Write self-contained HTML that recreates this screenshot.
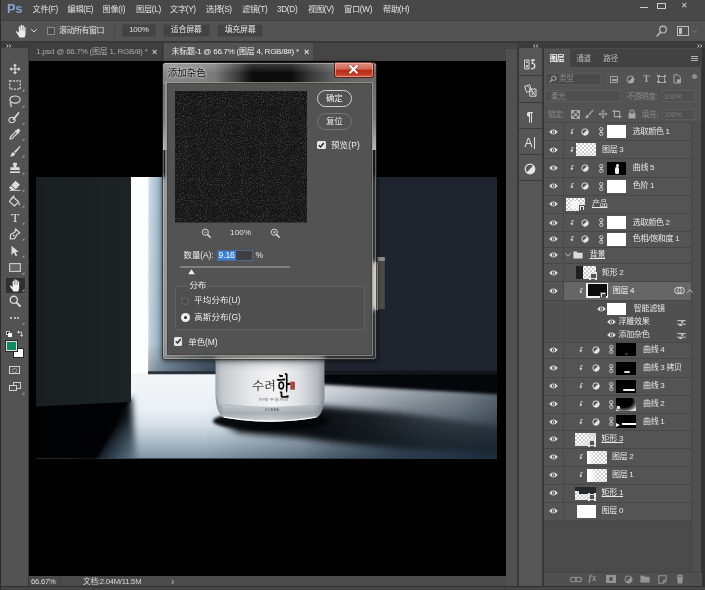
<!DOCTYPE html>
<html lang="zh-CN"><head><meta charset="utf-8"><title>Photoshop - 添加杂色</title>
<style>
html,body{margin:0;padding:0;background:#535353;}
body{width:705px;height:590px;overflow:hidden;position:relative;font-family:"Liberation Sans","Noto Sans CJK SC",sans-serif;}
#app{position:absolute;left:0;top:0;width:705px;height:590px;overflow:hidden;background:#535353;}
#app div,#app span,#app svg{box-sizing:border-box;}
svg{position:absolute;overflow:visible;}
.ic{stroke:#d8d8d8;fill:none;stroke-width:1.2;stroke-linecap:round;stroke-linejoin:round;}
</style></head><body><div id="app">

<div style="position:absolute;left:0px;top:0px;width:705px;height:20px;background:#484848;"></div>
<span style="position:absolute;left:7px;top:2.10px;font-size:12.8px;line-height:14.8px;color:#7fa6d2;white-space:nowrap;font-weight:bold;letter-spacing:-0.3px;">Ps</span>
<span style="position:absolute;left:32.5px;top:5.40px;font-size:8.2px;line-height:10.2px;color:#e2e2e2;white-space:nowrap;letter-spacing:-0.3px;">文件(F)</span>
<span style="position:absolute;left:67.5px;top:5.40px;font-size:8.2px;line-height:10.2px;color:#e2e2e2;white-space:nowrap;letter-spacing:-0.3px;">编辑(E)</span>
<span style="position:absolute;left:102.5px;top:5.40px;font-size:8.2px;line-height:10.2px;color:#e2e2e2;white-space:nowrap;letter-spacing:-0.3px;">图像(I)</span>
<span style="position:absolute;left:136px;top:5.40px;font-size:8.2px;line-height:10.2px;color:#e2e2e2;white-space:nowrap;letter-spacing:-0.3px;">图层(L)</span>
<span style="position:absolute;left:170px;top:5.40px;font-size:8.2px;line-height:10.2px;color:#e2e2e2;white-space:nowrap;letter-spacing:-0.3px;">文字(Y)</span>
<span style="position:absolute;left:206px;top:5.40px;font-size:8.2px;line-height:10.2px;color:#e2e2e2;white-space:nowrap;letter-spacing:-0.3px;">选择(S)</span>
<span style="position:absolute;left:242px;top:5.40px;font-size:8.2px;line-height:10.2px;color:#e2e2e2;white-space:nowrap;letter-spacing:-0.3px;">滤镜(T)</span>
<span style="position:absolute;left:277px;top:5.40px;font-size:8.2px;line-height:10.2px;color:#e2e2e2;white-space:nowrap;letter-spacing:-0.3px;">3D(D)</span>
<span style="position:absolute;left:308px;top:5.40px;font-size:8.2px;line-height:10.2px;color:#e2e2e2;white-space:nowrap;letter-spacing:-0.3px;">视图(V)</span>
<span style="position:absolute;left:344px;top:5.40px;font-size:8.2px;line-height:10.2px;color:#e2e2e2;white-space:nowrap;letter-spacing:-0.3px;">窗口(W)</span>
<span style="position:absolute;left:383px;top:5.40px;font-size:8.2px;line-height:10.2px;color:#e2e2e2;white-space:nowrap;letter-spacing:-0.3px;">帮助(H)</span>
<div style="position:absolute;left:640px;top:6.8px;width:8px;height:1.7px;background:#cfcfcf;"></div>
<div style="position:absolute;left:657px;top:3px;width:8.6px;height:6px;background:transparent;border:1.4px solid #cfcfcf;"></div>
<span style="position:absolute;left:681px;top:0.80px;font-size:8px;line-height:10px;color:#d8d8d8;white-space:nowrap;">✕</span>
<div style="position:absolute;left:0px;top:20px;width:705px;height:22px;background:#535353;border-top:1px solid #3e3e3e;border-bottom:1px solid #383838;"></div>
<svg style="left:15px;top:24px" width="12" height="14" viewBox="0 0 11.5 14"><path d="M4.2 13.5 C3.6 11.8 2.2 10.2 1 8.6 C0.4 7.8 1.4 6.9 2.2 7.6 L3.6 9 L3.6 3 C3.6 2 5 2 5 3 L5 6.5 L5.4 6.5 L5.4 1.6 C5.4 0.6 6.8 0.6 6.8 1.6 L6.8 6.5 L7.2 6.5 L7.2 2 C7.2 1 8.6 1 8.6 2 L8.6 6.8 L9 6.8 L9 3.4 C9 2.5 10.3 2.5 10.3 3.4 L10.3 9.5 C10.3 11.5 9.6 12.5 9.2 13.5 Z" fill="#ececec"/></svg>
<svg style="left:31px;top:29px" width="6" height="4" viewBox="0 0 6 4"><path d="M0.5 0.5 L3 3 L5.5 0.5" class="ic" style="stroke-width:1"/></svg>
<div style="position:absolute;left:47px;top:27px;width:8px;height:8px;background:#4a4a4a;border:1px solid #8a8a8a;"></div>
<span style="position:absolute;left:59px;top:25.80px;font-size:8px;line-height:10px;color:#e0e0e0;white-space:nowrap;letter-spacing:-0.5px;">滚动所有窗口</span>
<div style="position:absolute;left:121.7px;top:24.2px;width:34.3px;height:12.6px;background:#434343;border:1px solid #4b4b4b;border-radius:1px;"></div>
<span style="position:absolute;left:121.7px;top:24.2px;width:34.3px;height:12.6px;line-height:12.8px;text-align:center;font-size:8px;color:#e4e4e4;letter-spacing:-0.3px;">100%</span>
<div style="position:absolute;left:162.5px;top:24.2px;width:47.3px;height:12.6px;background:#434343;border:1px solid #4b4b4b;border-radius:1px;"></div>
<span style="position:absolute;left:162.5px;top:24.2px;width:47.3px;height:12.6px;line-height:12.8px;text-align:center;font-size:8px;color:#e4e4e4;letter-spacing:-0.3px;">适合屏幕</span>
<div style="position:absolute;left:216.7px;top:24.2px;width:46.7px;height:12.6px;background:#434343;border:1px solid #4b4b4b;border-radius:1px;"></div>
<span style="position:absolute;left:216.7px;top:24.2px;width:46.7px;height:12.6px;line-height:12.8px;text-align:center;font-size:8px;color:#e4e4e4;letter-spacing:-0.3px;">填充屏幕</span>
<div style="position:absolute;left:114px;top:24px;width:1px;height:14px;background:#464646;"></div>
<svg style="left:656px;top:25px" width="12" height="12" viewBox="0 0 12 12"><circle cx="7" cy="4.6" r="3.4" class="ic" style="stroke:#bdbdbd"/><path d="M4.6 7.2 L1.2 10.8" class="ic" style="stroke:#bdbdbd;stroke-width:1.6"/></svg>
<div style="position:absolute;left:677px;top:26px;width:12px;height:10px;background:transparent;border:1px solid #bdbdbd;"></div>
<div style="position:absolute;left:679px;top:28px;width:3px;height:6px;background:#bdbdbd;"></div>
<svg style="left:692px;top:30px" width="5" height="3" viewBox="0 0 5 3"><path d="M0.5 0.5 L2.5 2.5 L4.5 0.5" class="ic" style="stroke:#8a8a8a;stroke-width:0.8"/></svg>
<div style="position:absolute;left:0px;top:42px;width:705px;height:6px;background:#3c3c3c;"></div>
<div style="position:absolute;left:0px;top:48px;width:29px;height:542px;background:#535353;"></div>
<div style="position:absolute;left:29px;top:42px;width:477px;height:19px;background:#454545;border-top:1px solid #383838;"></div>
<svg style="left:6px;top:43.6px" width="5.4" height="4" viewBox="0 0 5.4 4"><path d="M0.5 0.5 L2.2 2 L0.5 3.5 M3.2 0.5 L4.9 2 L3.2 3.5" fill="none" stroke="#c4c4c4" stroke-width="1"/></svg>
<div style="position:absolute;left:29px;top:43px;width:134px;height:18px;background:#3f3f3f;border-right:1px solid #333;"></div>
<span style="position:absolute;left:36px;top:47.00px;font-size:8px;line-height:10px;color:#a9a9a9;white-space:nowrap;letter-spacing:-0.25px;">1.psd @ 66.7% (图层 1, RGB/8) *</span>
<span style="position:absolute;left:152px;top:46.50px;font-size:9px;line-height:11px;color:#c8c8c8;white-space:nowrap;font-weight:bold;">×</span>
<div style="position:absolute;left:164px;top:43px;width:149px;height:18px;background:#535353;"></div>
<span style="position:absolute;left:171.5px;top:47.00px;font-size:8px;line-height:10px;color:#efefef;white-space:nowrap;letter-spacing:-0.25px;">未标题-1 @ 66.7% (图层 4, RGB/8#) *</span>
<span style="position:absolute;left:304px;top:46.50px;font-size:9px;line-height:11px;color:#e4e4e4;white-space:nowrap;font-weight:bold;">×</span>
<svg style="left:29px;top:61px" width="477" height="515.3" viewBox="29 61 477 515.3">
<defs>
<clipPath id="sc"><rect x="36" y="177" width="461" height="281.5"/></clipPath>
<linearGradient id="gOpen" gradientUnits="userSpaceOnUse" x1="130" x2="220" y1="0" y2="0"><stop offset="0" stop-color="#ffffff"/><stop offset="0.195" stop-color="#fdfeff"/><stop offset="0.215" stop-color="#cbdbe7"/><stop offset="0.3" stop-color="#a9c0cf"/><stop offset="0.42" stop-color="#8aa1b3"/><stop offset="0.7" stop-color="#64788a"/><stop offset="1" stop-color="#46566a"/></linearGradient>
<linearGradient id="gOpenV" gradientUnits="userSpaceOnUse" x1="0" x2="0" y1="177" y2="373"><stop offset="0" stop-color="#0b1016" stop-opacity="0"/><stop offset="0.85" stop-color="#0b1016" stop-opacity="0.05"/><stop offset="1" stop-color="#0b1016" stop-opacity="0.3"/></linearGradient>
<linearGradient id="gDoor" gradientUnits="userSpaceOnUse" x1="36" x2="131" y1="0" y2="0"><stop offset="0" stop-color="#191f21"/><stop offset="1" stop-color="#1c2425"/></linearGradient>
<linearGradient id="gFloorH" gradientUnits="userSpaceOnUse" x1="100" x2="497" y1="0" y2="0"><stop offset="0" stop-color="#e6ecf0"/><stop offset="0.3" stop-color="#e4eaee"/><stop offset="0.57" stop-color="#bcc7ce"/><stop offset="0.68" stop-color="#93a2ac"/><stop offset="0.82" stop-color="#687883"/><stop offset="1" stop-color="#4c5b67"/></linearGradient>
<linearGradient id="gFloorVold" gradientUnits="userSpaceOnUse" x1="0" x2="0" y1="373" y2="458.5"><stop offset="0" stop-color="#101a24" stop-opacity="0"/><stop offset="0.3" stop-color="#101a24" stop-opacity="0.05"/><stop offset="0.55" stop-color="#101a24" stop-opacity="0.28"/><stop offset="0.8" stop-color="#0e1820" stop-opacity="0.55"/><stop offset="1" stop-color="#0c141c" stop-opacity="0.74"/></linearGradient>
<linearGradient id="gJar" x1="0" x2="1" y1="0" y2="0"><stop offset="0" stop-color="#a4aab0"/><stop offset="0.05" stop-color="#c2c7cb"/><stop offset="0.16" stop-color="#d2d6d9"/><stop offset="0.32" stop-color="#e6e8ea"/><stop offset="0.55" stop-color="#f4f4f5"/><stop offset="0.78" stop-color="#dde0e3"/><stop offset="0.94" stop-color="#b4b9be"/><stop offset="1" stop-color="#8a9198"/></linearGradient>
<linearGradient id="gJarB" x1="0" x2="1" y1="0" y2="0"><stop offset="0" stop-color="#8e969c"/><stop offset="0.08" stop-color="#d5d9dc"/><stop offset="0.5" stop-color="#e6e8ea"/><stop offset="0.9" stop-color="#c4c9cd"/><stop offset="1" stop-color="#7c858c"/></linearGradient>
<filter color-interpolation-filters="sRGB" id="b1" x="-10%" y="-100%" width="120%" height="300%"><feGaussianBlur color-interpolation-filters="sRGB" stdDeviation="0.7"/></filter>
<filter color-interpolation-filters="sRGB" id="b2" x="-20%" y="-20%" width="140%" height="140%"><feGaussianBlur color-interpolation-filters="sRGB" stdDeviation="1.5"/></filter>
<filter color-interpolation-filters="sRGB" id="b3" x="-30%" y="-50%" width="160%" height="200%"><feGaussianBlur color-interpolation-filters="sRGB" stdDeviation="3"/></filter>
<filter color-interpolation-filters="sRGB" id="b5" x="-30%" y="-50%" width="160%" height="200%"><feGaussianBlur color-interpolation-filters="sRGB" stdDeviation="5"/></filter>
<filter color-interpolation-filters="sRGB" id="b12" x="-50%" y="-50%" width="200%" height="200%"><feGaussianBlur color-interpolation-filters="sRGB" stdDeviation="12"/></filter>
<linearGradient id="gSh" gradientUnits="userSpaceOnUse" x1="320" x2="500" y1="0" y2="0"><stop offset="0" stop-color="#06090c" stop-opacity="0.96"/><stop offset="0.3" stop-color="#080c10" stop-opacity="0.85"/><stop offset="0.6" stop-color="#0a0f14" stop-opacity="0.6"/><stop offset="1" stop-color="#0a0f14" stop-opacity="0.35"/></linearGradient>
<linearGradient id="gJarTop" gradientUnits="userSpaceOnUse" x1="0" x2="0" y1="355" y2="372"><stop offset="0" stop-color="#6e757c" stop-opacity="0.55"/><stop offset="0.4" stop-color="#8a9097" stop-opacity="0.28"/><stop offset="1" stop-color="#8a9097" stop-opacity="0"/></linearGradient>
<linearGradient id="gJarBase" gradientUnits="userSpaceOnUse" x1="0" x2="0" y1="404" y2="422"><stop offset="0" stop-color="#7f878e" stop-opacity="0.2"/><stop offset="0.5" stop-color="#727a82" stop-opacity="0.5"/><stop offset="0.85" stop-color="#8c949b" stop-opacity="0.35"/><stop offset="1" stop-color="#ffffff" stop-opacity="0.2"/></linearGradient>
<linearGradient id="gFloorV" gradientUnits="userSpaceOnUse" x1="0" x2="0" y1="373" y2="458.5"><stop offset="0" stop-color="#f3f6f9"/><stop offset="0.42" stop-color="#ebf0f4"/><stop offset="0.6" stop-color="#d6e0e8"/><stop offset="0.74" stop-color="#b9c8d3"/><stop offset="1" stop-color="#8294a2"/></linearGradient>
<linearGradient id="gFloorR" gradientUnits="userSpaceOnUse" x1="300" x2="497" y1="0" y2="0"><stop offset="0" stop-color="#162432" stop-opacity="0"/><stop offset="0.15" stop-color="#162432" stop-opacity="0.16"/><stop offset="0.5" stop-color="#162432" stop-opacity="0.36"/><stop offset="0.8" stop-color="#162432" stop-opacity="0.52"/><stop offset="1" stop-color="#162432" stop-opacity="0.68"/></linearGradient>
<linearGradient id="gFloorRV" gradientUnits="userSpaceOnUse" x1="0" x2="0" y1="392" y2="458.5"><stop offset="0" stop-color="#0c1c2c" stop-opacity="0"/><stop offset="0.3" stop-color="#0c1c2c" stop-opacity="0.22"/><stop offset="1" stop-color="#0c1c2c" stop-opacity="0.62"/></linearGradient>
<linearGradient id="gPen" gradientUnits="userSpaceOnUse" x1="104" y1="436" x2="136" y2="460.6"><stop offset="0" stop-color="#020304" stop-opacity="1"/><stop offset="0.2" stop-color="#0c141c" stop-opacity="0.95"/><stop offset="0.6" stop-color="#2c3e4c" stop-opacity="0.82"/><stop offset="1" stop-color="#54697a" stop-opacity="0.62"/></linearGradient>
<linearGradient id="gMaskH" gradientUnits="userSpaceOnUse" x1="205" x2="400" y1="0" y2="0"><stop offset="0" stop-color="#000"/><stop offset="1" stop-color="#fff"/></linearGradient>
<mask id="mRV" maskUnits="userSpaceOnUse" x="190" y="370" width="320" height="95"><rect x="190" y="370" width="320" height="95" fill="url(#gMaskH)"/></mask>
</defs>
<rect x="29" y="61" width="477" height="515.3" fill="#010102"/>
<g clip-path="url(#sc)">
  <!-- back wall -->
  <rect x="36" y="177" width="461" height="196" fill="#1f242e"/>
  <!-- light opening -->
  <rect x="130" y="177" width="90" height="196" fill="url(#gOpen)"/>
  <rect x="148" y="177" width="72" height="196" fill="url(#gOpenV)"/>
  <!-- handle -->
  <rect x="368" y="262" width="10" height="48" fill="#e6e4c8"/>
  <rect x="377.6" y="257" width="7.2" height="52" fill="#4b4c4a"/>
  <rect x="377.6" y="257" width="7.2" height="4" fill="#8c8c8a"/>
  <!-- floor -->
  <rect x="36" y="373" width="461" height="86" fill="url(#gFloorV)"/>
  <rect x="300" y="373" width="197" height="86" fill="url(#gFloorR)"/>
  <rect x="195" y="373" width="302" height="86" fill="url(#gFloorRV)" mask="url(#mRV)"/>
  <!-- door shadow penumbra -->
  <polygon points="131.5,396 137,470 70,470" fill="url(#gPen)" filter="url(#b3)"/>
  <!-- hard door shadow -->
  <polygon points="10,396 131.5,400 84,480 10,480" fill="#010203" filter="url(#b2)"/>
  <!-- dark strip under wall, right -->
  <polygon points="322,372 500,372 500,394.5 322,384.5" fill="#04060a" filter="url(#b2)"/>
  <!-- jar cast shadow -->
  <polygon points="226,427 321,406 400,413 510,428 510,455 400,449 340,443 300,438 240,433" fill="url(#gSh)" filter="url(#b3)"/>
  <ellipse cx="271" cy="421" rx="58" ry="9.5" fill="#030508" opacity="0.97" filter="url(#b2)"/>
  <rect x="148" y="371.3" width="70" height="3" fill="#1c252e" opacity="0.9" filter="url(#b1)"/>
  <!-- door -->
  <polygon points="36,177 131,177 131,401.8 36,406.5" fill="url(#gDoor)"/>
  <!-- jar -->
  <path d="M215.5 355 L324.5 355 L324.5 396 Q324 412 317.5 417.3 Q270 426 222.5 417.3 Q216 412 215.5 396 Z" fill="url(#gJarB)"/>
  <path d="M216 355 L324 355 L324 396 Q322 404 316 405.5 Q270 409 224 405.5 Q218 404 216 396 Z" fill="url(#gJar)"/>
  <path d="M216 355 L324 355 L324 372 L216 372 Z" fill="url(#gJarTop)"/>
  <path d="M217 403 Q270 410.5 323 403 Q322.5 412 317.5 417.3 Q270 426 222.5 417.3 Q217.5 412 217 403 Z" fill="url(#gJarBase)"/>
  <path d="M219 404 Q270 411 321 404" stroke="#b6bcc1" stroke-width="1" fill="none" opacity="0.8"/>
  <path d="M224 417.2 Q270 425 316 417.2" stroke="#ffffff" stroke-width="1.3" fill="none" opacity="0.95"/>
  <text x="252" y="390.5" font-family="'Liberation Serif','Noto Serif CJK SC','NanumGothic',serif" font-size="11.5" fill="#111" textLength="24" lengthAdjust="spacingAndGlyphs">수려</text>
  <text x="276.5" y="395.5" font-family="'Liberation Serif','Noto Serif CJK SC','NanumGothic',serif" font-weight="bold" font-size="25" fill="#0c0c0c" textLength="14" lengthAdjust="spacingAndGlyphs">한</text>
  <rect x="290.3" y="381.7" width="4.6" height="8" fill="#a8453c"/>
  <text x="258.5" y="401.5" font-family="'Liberation Sans','Noto Sans CJK KR',sans-serif" font-size="3.6" fill="#777" textLength="30" lengthAdjust="spacingAndGlyphs">미백 주름개선</text>
  <text x="265" y="410.6" font-family="'Liberation Sans',sans-serif" font-size="3.2" fill="#555" textLength="14" lengthAdjust="spacingAndGlyphs">KOREA</text>
</g>
</svg>

<div style="position:absolute;left:29px;top:576.3px;width:477px;height:13.7px;background:#4b4b4b;"></div>
<span style="position:absolute;left:31px;top:577.20px;font-size:7.6px;line-height:9.6px;color:#dcdcdc;white-space:nowrap;letter-spacing:-0.2px;">66.67%</span>
<div style="position:absolute;left:59px;top:576.3px;width:1px;height:11px;background:#3e3e3e;"></div>
<span style="position:absolute;left:83px;top:577.20px;font-size:7.6px;line-height:9.6px;color:#d8d8d8;white-space:nowrap;letter-spacing:-0.2px;">文档:2.04M/11.5M</span>
<span style="position:absolute;left:171px;top:576.00px;font-size:10px;line-height:12px;color:#bbb;white-space:nowrap;">›</span>
<div style="position:absolute;left:506px;top:48px;width:12px;height:542px;background:#505050;"></div>
<div style="position:absolute;left:506px;top:42px;width:12px;height:6.5px;background:#454545;border-top:1px solid #383838;"></div>
<div style="position:absolute;left:28px;top:48px;width:1px;height:542px;background:#3a3a3a;"></div>
<svg style="left:8.6px;top:63.0px" width="12" height="12" viewBox="0 0 12 12"><path d="M6 0.5 L8 3 L6.6 3 L6.6 5.4 L9 5.4 L9 4 L11.5 6 L9 8 L9 6.6 L6.6 6.6 L6.6 9 L8 9 L6 11.5 L4 9 L5.4 9 L5.4 6.6 L3 6.6 L3 8 L0.5 6 L3 4 L3 5.4 L5.4 5.4 L5.4 3 L4 3 Z" fill="#dcdcdc"/></svg>
<svg style="left:8.6px;top:80.0px" width="12" height="10" viewBox="0 0 12 10"><rect x="0.8" y="0.8" width="10.4" height="8.4" fill="none" stroke="#dcdcdc" stroke-width="1.2" stroke-dasharray="2 1.3"/></svg>
<svg style="left:8.1px;top:95.0px" width="13" height="12" viewBox="0 0 13 12"><ellipse cx="7" cy="4.6" rx="5.2" ry="3.6" class="ic"/><path d="M3.2 7.2 Q1.5 8.5 2.8 10 Q4 11 3 11.6" class="ic"/></svg>
<svg style="left:8.1px;top:111.5px" width="13" height="12" viewBox="0 0 13 12"><path d="M10.5 1 L5.5 7.2" class="ic" style="stroke-width:1.8"/><ellipse cx="4" cy="8" rx="3.2" ry="2.6" class="ic" style="stroke-dasharray:1.6 1.1"/></svg>
<svg style="left:8.6px;top:128.0px" width="12" height="12" viewBox="0 0 12 12"><path d="M10.6 1.4 Q9 0 7.8 1.8 L7 2.8 L6.2 2.2 L5.4 3 L9 6.6 L9.8 5.8 L9.2 5 L10.2 4.2 Q12 3 10.6 1.4Z" fill="#dcdcdc"/><path d="M6 4.4 L1.4 9 L1 11 L3 10.6 L7.6 6" class="ic"/></svg>
<svg style="left:8.6px;top:145.0px" width="12" height="12" viewBox="0 0 12 12"><path d="M11 0.8 L5.2 6.6 L6.6 8 L11.6 1.6 Z" fill="#dcdcdc"/><path d="M4.6 7.2 Q2.4 7.2 2.2 9.4 Q2 10.8 0.6 11.2 Q4 12 5.6 10 Q6.4 8.8 5.8 8.2 Z" fill="#dcdcdc"/></svg>
<svg style="left:8.6px;top:162.0px" width="12" height="12" viewBox="0 0 12 12"><path d="M4.6 0.8 H7.4 Q8.4 0.8 8 2 L7.2 5.2 H10.6 V8 H1.4 V5.2 H4.8 L4 2 Q3.6 0.8 4.6 0.8Z" fill="#dcdcdc"/><rect x="1" y="9.4" width="10" height="1.6" fill="#dcdcdc"/></svg>
<svg style="left:8.1px;top:179.5px" width="13" height="11" viewBox="0 0 13 11"><path d="M7.4 0.8 L12 4.6 L7.2 10 L3.4 10 L1 7.8 Z" fill="#dcdcdc"/><path d="M3 5.6 L7.8 9.6" stroke="#535353" stroke-width="1"/><path d="M2 10.4 H12" class="ic" style="stroke-width:0.9"/></svg>
<svg style="left:8.1px;top:195.0px" width="13" height="12" viewBox="0 0 13 12"><path d="M5 2 L10.6 6.8 L6.4 11 L1.4 6.4 Z" class="ic"/><path d="M3.2 4.2 L6 1 " class="ic"/><path d="M10.8 7 Q12.8 9.6 11.4 10.6 Q10 10.6 10.8 7Z" fill="#dcdcdc"/></svg>
<span style="position:absolute;left:11px;top:209.85px;font-size:13.5px;line-height:15.5px;color:#e0e0e0;white-space:nowrap;font-family:&quot;Liberation Serif&quot;,serif;">T</span>
<svg style="left:8.6px;top:228.0px" width="12" height="12" viewBox="0 0 12 12"><path d="M6.6 0.8 L10.8 5 L8.2 6.2 L5.6 10.6 L1.2 11 L1.6 6.6 L6 4 Z" class="ic"/><circle cx="4.8" cy="7.4" r="0.9" fill="#dcdcdc"/></svg>
<svg style="left:9.6px;top:244.5px" width="10" height="12" viewBox="0 0 10 12"><path d="M1.5 0.8 L1.5 10 L4 7.6 L5.6 11.2 L7.2 10.4 L5.6 7 L8.8 7 Z" fill="#dcdcdc"/></svg>
<svg style="left:8.6px;top:263.0px" width="12" height="9" viewBox="0 0 12 9"><rect x="0.6" y="0.6" width="10.8" height="7.8" fill="#686868" stroke="#cfcfcf" stroke-width="1.1"/></svg>
<div style="position:absolute;left:6px;top:277.5px;width:18.5px;height:15.5px;background:#303030;border-radius:1px;"></div>
<svg style="left:8.8px;top:278.5px" width="11.5" height="13" viewBox="0 0.5 11.5 13.5"><path d="M4.2 13.5 C3.6 11.8 2.2 10.2 1 8.6 C0.4 7.8 1.4 6.9 2.2 7.6 L3.6 9 L3.6 3 C3.6 2 5 2 5 3 L5 6.5 L5.4 6.5 L5.4 1.6 C5.4 0.6 6.8 0.6 6.8 1.6 L6.8 6.5 L7.2 6.5 L7.2 2 C7.2 1 8.6 1 8.6 2 L8.6 6.8 L9 6.8 L9 3.4 C9 2.5 10.3 2.5 10.3 3.4 L10.3 9.5 C10.3 11.5 9.6 12.5 9.2 13.5 Z" fill="#f0f0f0"/></svg>
<svg style="left:8.6px;top:295.0px" width="12" height="12" viewBox="0 0 12 12"><circle cx="4.8" cy="4.8" r="3.6" class="ic" style="stroke-width:1.4"/><path d="M7.6 7.6 L11 11" class="ic" style="stroke-width:2"/></svg>
<div style="position:absolute;left:10.100000000000001px;top:316.6px;width:2.4px;height:2.4px;background:#dadada;border-radius:1.2px;"></div>
<div style="position:absolute;left:13.600000000000001px;top:316.6px;width:2.4px;height:2.4px;background:#dadada;border-radius:1.2px;"></div>
<div style="position:absolute;left:17.1px;top:316.6px;width:2.4px;height:2.4px;background:#dadada;border-radius:1.2px;"></div>
<svg style="left:21.5px;top:89px" width="2.4" height="2.4" viewBox="0 0 3 3"><path d="M3 0 V3 H0Z" fill="#a0a0a0"/></svg>
<svg style="left:21.5px;top:105px" width="2.4" height="2.4" viewBox="0 0 3 3"><path d="M3 0 V3 H0Z" fill="#a0a0a0"/></svg>
<svg style="left:21.5px;top:121.5px" width="2.4" height="2.4" viewBox="0 0 3 3"><path d="M3 0 V3 H0Z" fill="#a0a0a0"/></svg>
<svg style="left:21.5px;top:138px" width="2.4" height="2.4" viewBox="0 0 3 3"><path d="M3 0 V3 H0Z" fill="#a0a0a0"/></svg>
<svg style="left:21.5px;top:155px" width="2.4" height="2.4" viewBox="0 0 3 3"><path d="M3 0 V3 H0Z" fill="#a0a0a0"/></svg>
<svg style="left:21.5px;top:172px" width="2.4" height="2.4" viewBox="0 0 3 3"><path d="M3 0 V3 H0Z" fill="#a0a0a0"/></svg>
<svg style="left:21.5px;top:189px" width="2.4" height="2.4" viewBox="0 0 3 3"><path d="M3 0 V3 H0Z" fill="#a0a0a0"/></svg>
<svg style="left:21.5px;top:205px" width="2.4" height="2.4" viewBox="0 0 3 3"><path d="M3 0 V3 H0Z" fill="#a0a0a0"/></svg>
<svg style="left:21.5px;top:221.5px" width="2.4" height="2.4" viewBox="0 0 3 3"><path d="M3 0 V3 H0Z" fill="#a0a0a0"/></svg>
<svg style="left:21.5px;top:238px" width="2.4" height="2.4" viewBox="0 0 3 3"><path d="M3 0 V3 H0Z" fill="#a0a0a0"/></svg>
<svg style="left:21.5px;top:254.5px" width="2.4" height="2.4" viewBox="0 0 3 3"><path d="M3 0 V3 H0Z" fill="#a0a0a0"/></svg>
<svg style="left:21.5px;top:271.5px" width="2.4" height="2.4" viewBox="0 0 3 3"><path d="M3 0 V3 H0Z" fill="#a0a0a0"/></svg>
<svg style="left:21.5px;top:288.5px" width="2.4" height="2.4" viewBox="0 0 3 3"><path d="M3 0 V3 H0Z" fill="#a0a0a0"/></svg>
<svg style="left:21.5px;top:321.5px" width="2.4" height="2.4" viewBox="0 0 3 3"><path d="M3 0 V3 H0Z" fill="#a0a0a0"/></svg>
<div style="position:absolute;left:6px;top:331px;width:4px;height:4px;background:#111;border:0.5px solid #ccc;"></div>
<div style="position:absolute;left:8px;top:333px;width:4px;height:4px;background:#fff;"></div>
<svg style="left:17px;top:330px" width="7" height="7" viewBox="0 0 7 7"><path d="M1.2 2.2 H4.6 V5.6" class="ic" style="stroke-width:0.9"/><path d="M0 2.2 L2 0.6 V3.8Z M4.6 7 L3 5 H6.2Z" fill="#d8d8d8"/></svg>
<div style="position:absolute;left:12.6px;top:347.5px;width:11px;height:10.8px;background:#ffffff;border:0.5px solid #2a2a2a;"></div>
<div style="position:absolute;left:6.3px;top:340.6px;width:10.6px;height:10.6px;background:#0f8a5c;border:1px solid #dcdcdc;outline:0.6px solid #2a2a2a;"></div>
<div style="position:absolute;left:9.1px;top:366px;width:11.2px;height:8.4px;background:transparent;border:1px solid #cfcfcf;"></div>
<div style="position:absolute;left:12.2px;top:367.8px;width:5px;height:4.8px;background:transparent;border:1px dotted #bdbdbd;border-radius:3px;"></div>
<div style="position:absolute;left:12.6px;top:382.4px;width:8px;height:6.5px;background:transparent;border:1px solid #cfcfcf;"></div>
<div style="position:absolute;left:9.1px;top:384.8px;width:8.4px;height:6.4px;background:#535353;border:1px solid #cfcfcf;"></div>
<svg style="left:21.5px;top:392px" width="2.4" height="2.4" viewBox="0 0 3 3"><path d="M3 0 V3 H0Z" fill="#a0a0a0"/></svg>
<div style="position:absolute;left:517px;top:42px;width:188px;height:6px;background:#3c3c3c;"></div>
<svg style="left:533px;top:43.6px" width="5.4" height="4" viewBox="0 0 5.4 4"><path d="M2.2 0.5 L0.5 2 L2.2 3.5 M4.9 0.5 L3.2 2 L4.9 3.5" fill="none" stroke="#c4c4c4" stroke-width="1"/></svg>
<svg style="left:696.5px;top:43.6px" width="5.4" height="4" viewBox="0 0 5.4 4"><path d="M0.5 0.5 L2.2 2 L0.5 3.5 M3.2 0.5 L4.9 2 L3.2 3.5" fill="none" stroke="#c4c4c4" stroke-width="1"/></svg>
<div style="position:absolute;left:517px;top:48px;width:1.5px;height:542px;background:#383838;"></div>
<div style="position:absolute;left:518.5px;top:48px;width:23px;height:542px;background:#565656;"></div>
<div style="position:absolute;left:541.5px;top:48px;width:2px;height:542px;background:#383838;"></div>
<div style="position:absolute;left:518.5px;top:75.3px;width:23px;height:1.2px;background:#3c3c3c;"></div>
<div style="position:absolute;left:518.5px;top:101.5px;width:23px;height:1.2px;background:#3c3c3c;"></div>
<div style="position:absolute;left:518.5px;top:127.8px;width:23px;height:1.2px;background:#3c3c3c;"></div>
<div style="position:absolute;left:518.5px;top:154px;width:23px;height:1.2px;background:#3c3c3c;"></div>
<div style="position:absolute;left:518.5px;top:180.3px;width:23px;height:1.2px;background:#3c3c3c;"></div>
<svg style="left:524.0px;top:58.0px" width="12" height="12" viewBox="0 0 12 12"><rect x="1" y="2" width="4" height="9" class="ic" style="stroke-width:1"/><rect x="2.2" y="3.4" width="1.6" height="1.6" fill="#dcdcdc"/><rect x="2.2" y="7" width="1.6" height="2.6" fill="#dcdcdc"/><path d="M7.4 2 H10.4 Q8 3.4 8 5.4 Q10.8 5.4 10.8 8 Q10.8 10.6 7.4 10.8" class="ic" style="stroke-width:1.3"/></svg>
<svg style="left:523.9px;top:83.8px" width="13" height="13" viewBox="0 0 13 13"><path d="M1 2.2 L5.6 0.8 L7.6 6.8 L3 8.2Z" class="ic" style="stroke-width:1"/><path d="M6.2 5 L12 5 L12 12.2 L6.2 12.2Z" class="ic" style="stroke-width:1"/><path d="M3.2 1.6 L7.6 6.8 M7.8 6.6 L11 11.2 M8.4 7 V10.6 L10.6 7.4" class="ic" style="stroke-width:0.8"/></svg>
<span style="position:absolute;left:526.5px;top:109.50px;font-size:12px;line-height:14px;color:#e6e6e6;white-space:nowrap;font-weight:bold;">¶</span>
<span style="position:absolute;left:524.5px;top:136.00px;font-size:12px;line-height:14px;color:#e2e2e2;white-space:nowrap;">A</span>
<div style="position:absolute;left:533.5px;top:137px;width:1px;height:12px;background:#e2e2e2;"></div>
<svg style="left:524px;top:163px" width="12" height="12" viewBox="0 0 12 12"><circle cx="6" cy="6" r="4.8" fill="none" stroke="#e6e6e6" stroke-width="1.2"/><path d="M9.4 2.6 A4.8 4.8 0 0 1 2.6 9.4 Z" fill="#e6e6e6"/></svg>
<div style="position:absolute;left:543.5px;top:48px;width:158px;height:542px;background:#4b4b4b;"></div>
<div style="position:absolute;left:700.8px;top:48px;width:4.2px;height:542px;background:#333333;"></div>
<div style="position:absolute;left:543.5px;top:67px;width:157px;height:55px;background:#535353;"></div>
<div style="position:absolute;left:543.5px;top:48.5px;width:158px;height:18.5px;background:#424242;"></div>
<div style="position:absolute;left:543.5px;top:49px;width:26.5px;height:18px;background:#535353;"></div>
<span style="position:absolute;left:549.8px;top:53.50px;font-size:7.6px;line-height:9.6px;color:#f4f4f4;white-space:nowrap;font-weight:bold;letter-spacing:-0.4px;">图层</span>
<span style="position:absolute;left:576.3px;top:53.50px;font-size:7.6px;line-height:9.6px;color:#b4b4b4;white-space:nowrap;letter-spacing:-0.4px;">通道</span>
<span style="position:absolute;left:603.2px;top:53.50px;font-size:7.6px;line-height:9.6px;color:#b4b4b4;white-space:nowrap;letter-spacing:-0.4px;">路径</span>
<div style="position:absolute;left:691px;top:55.8px;width:7px;height:1.1px;background:#b4b4b4;"></div>
<div style="position:absolute;left:691px;top:58.0px;width:7px;height:1.1px;background:#b4b4b4;"></div>
<div style="position:absolute;left:691px;top:60.199999999999996px;width:7px;height:1.1px;background:#b4b4b4;"></div>
<div style="position:absolute;left:545px;top:72.8px;width:55.5px;height:12.4px;background:#4a4a4a;border:1px solid #585858;"></div>
<svg style="left:548.5px;top:75px" width="8" height="8" viewBox="0 0 8 8"><circle cx="4.8" cy="3.2" r="2.3" class="ic" style="stroke:#a6a6a6;stroke-width:1"/><path d="M3 5 L0.8 7.2" class="ic" style="stroke:#a6a6a6"/></svg>
<span style="position:absolute;left:559px;top:74.20px;font-size:7.6px;line-height:9.6px;color:#8c8c8c;white-space:nowrap;letter-spacing:-0.3px;">类型</span>
<div style="position:absolute;left:610.4px;top:75.5px;width:8px;height:7px;background:transparent;border:1px solid #a2a2a2;"></div>
<div style="position:absolute;left:612px;top:78.7px;width:5px;height:2.3px;background:#a2a2a2;"></div>
<svg style="left:626.3px;top:74.5px" width="9" height="9" viewBox="0 0 9 9"><circle cx="4.5" cy="4.5" r="3.5" fill="none" stroke="#a6a6a6" stroke-width="1"/><path d="M7 2 A3.5 3.5 0 0 1 2 7 Z" fill="#a6a6a6"/></svg>
<span style="position:absolute;left:643.3px;top:73.85px;font-size:9.5px;line-height:11.5px;color:#a6a6a6;white-space:nowrap;font-family:&quot;Liberation Serif&quot;,serif;font-weight:bold;">T</span>
<div style="position:absolute;left:658.2px;top:75.5px;width:7px;height:7px;background:transparent;border:1px solid #a2a2a2;"></div>
<div style="position:absolute;left:657.2px;top:74.5px;width:2.4px;height:2.4px;background:#a6a6a6;"></div>
<div style="position:absolute;left:663.7px;top:74.5px;width:2.4px;height:2.4px;background:#a6a6a6;"></div>
<div style="position:absolute;left:657.2px;top:81px;width:2.4px;height:2.4px;background:#a6a6a6;"></div>
<div style="position:absolute;left:663.7px;top:81px;width:2.4px;height:2.4px;background:#a6a6a6;"></div>
<svg style="left:673px;top:74px" width="9" height="10" viewBox="0 0 9 10"><path d="M1 0.8 H5 L7.4 3.2 V9 H1Z" fill="none" stroke="#a6a6a6" stroke-width="1"/><rect x="4" y="5.4" width="4" height="3.2" fill="#a6a6a6"/></svg>
<div style="position:absolute;left:692px;top:74px;width:5px;height:5px;background:#8e8e8e;border-radius:3px;"></div>
<div style="position:absolute;left:545px;top:90.3px;width:75.7px;height:11.8px;background:#4f4f4f;border:1px solid #5b5b5b;"></div>
<span style="position:absolute;left:551px;top:91.70px;font-size:7.6px;line-height:9.6px;color:#8a8a8a;white-space:nowrap;letter-spacing:-0.3px;">柔光</span>
<span style="position:absolute;left:627px;top:91.70px;font-size:7.6px;line-height:9.6px;color:#8a8a8a;white-space:nowrap;letter-spacing:-0.55px;">不透明度:</span>
<div style="position:absolute;left:661.7px;top:90.3px;width:33px;height:11.8px;background:#4f4f4f;border:1px solid #5b5b5b;"></div>
<span style="position:absolute;left:664px;top:91.80px;font-size:7.4px;line-height:9.4px;color:#7c7c7c;white-space:nowrap;letter-spacing:-0.3px;">100%</span>
<span style="position:absolute;left:548px;top:109.60px;font-size:7.6px;line-height:9.6px;color:#8a8a8a;white-space:nowrap;letter-spacing:-0.4px;">锁定:</span>
<svg style="left:571.1px;top:109.9px" width="9" height="9" viewBox="0 0 9 9"><rect x="0.5" y="0.5" width="8" height="8" fill="none" stroke="#a8a8a8" stroke-width="0.9"/><path d="M0.5 0.5 h2.7 v2.7 h-2.7z M5.8 0.5 h2.7 v2.7 h-2.7z M3.2 3.2 h2.7 v2.7 h-2.7z M0.5 5.8 h2.7 v2.7 h-2.7z M5.8 5.8 h2.7 v2.7 h-2.7z" fill="#a8a8a8"/></svg>
<svg style="left:584px;top:109.4px" width="10" height="10" viewBox="0 0 10 10"><path d="M9 0.6 L4.4 5.2 L5.4 6.2 L9.6 1.4 Z" fill="#a8a8a8"/><path d="M3.8 5.8 Q1.8 5.8 1.8 7.8 Q1.6 8.8 0.6 9.2 Q3.4 9.8 4.6 8.2 Q5.2 7.2 4.6 6.6Z" fill="#a8a8a8"/></svg>
<svg style="left:598.2px;top:109.4px" width="10" height="10" viewBox="0 0 12 12"><path d="M6 0.5 L8 3 L6.6 3 L6.6 5.4 L9 5.4 L9 4 L11.5 6 L9 8 L9 6.6 L6.6 6.6 L6.6 9 L8 9 L6 11.5 L4 9 L5.4 9 L5.4 6.6 L3 6.6 L3 8 L0.5 6 L3 4 L3 5.4 L5.4 5.4 L5.4 3 L4 3 Z" fill="#a8a8a8"/></svg>
<svg style="left:612.2px;top:109.4px" width="10" height="10" viewBox="0 0 10 10"><path d="M2.4 0.4 V7.6 H9.6 M0.4 2.4 H7.6 V9.6" fill="none" stroke="#a8a8a8" stroke-width="1.1"/></svg>
<svg style="left:627.7px;top:109px" width="8" height="10" viewBox="0 0 8 10"><rect x="0.6" y="4.4" width="6.8" height="5" fill="#a8a8a8"/><path d="M2 4.4 V2.8 Q2 1 4 1 Q6 1 6 2.8 V4.4" fill="none" stroke="#a8a8a8" stroke-width="1.1"/></svg>
<span style="position:absolute;left:641.8px;top:109.60px;font-size:7.6px;line-height:9.6px;color:#8a8a8a;white-space:nowrap;letter-spacing:-0.4px;">填充:</span>
<div style="position:absolute;left:661.7px;top:108.5px;width:33px;height:11.8px;background:#4f4f4f;border:1px solid #5b5b5b;"></div>
<span style="position:absolute;left:664px;top:109.70px;font-size:7.4px;line-height:9.4px;color:#7c7c7c;white-space:nowrap;letter-spacing:-0.3px;">100%</span>
<div style="position:absolute;left:543.5px;top:122px;width:147.5px;height:398px;background:#545454;"></div>
<div style="position:absolute;left:543.5px;top:300.3px;width:147.5px;height:42.2px;background:#505050;"></div>
<div style="position:absolute;left:563.5px;top:281.5px;width:127.5px;height:18.5px;background:#666666;"></div>
<div style="position:absolute;left:543.5px;top:122.0px;width:147.5px;height:1px;background:#474747;"></div>
<div style="position:absolute;left:543.5px;top:140.2px;width:147.5px;height:1px;background:#474747;"></div>
<div style="position:absolute;left:543.5px;top:158.3px;width:147.5px;height:1px;background:#474747;"></div>
<div style="position:absolute;left:543.5px;top:176.5px;width:147.5px;height:1px;background:#474747;"></div>
<div style="position:absolute;left:543.5px;top:194.5px;width:147.5px;height:1px;background:#474747;"></div>
<div style="position:absolute;left:543.5px;top:213.0px;width:147.5px;height:1px;background:#474747;"></div>
<div style="position:absolute;left:543.5px;top:231.0px;width:147.5px;height:1px;background:#474747;"></div>
<div style="position:absolute;left:543.5px;top:247.0px;width:147.5px;height:1px;background:#474747;"></div>
<div style="position:absolute;left:543.5px;top:262.5px;width:147.5px;height:1px;background:#474747;"></div>
<div style="position:absolute;left:543.5px;top:280.5px;width:147.5px;height:1px;background:#474747;"></div>
<div style="position:absolute;left:543.5px;top:299.8px;width:147.5px;height:1px;background:#474747;"></div>
<div style="position:absolute;left:543.5px;top:342.0px;width:147.5px;height:1px;background:#474747;"></div>
<div style="position:absolute;left:543.5px;top:358.2px;width:147.5px;height:1px;background:#474747;"></div>
<div style="position:absolute;left:543.5px;top:376.5px;width:147.5px;height:1px;background:#474747;"></div>
<div style="position:absolute;left:543.5px;top:394.5px;width:147.5px;height:1px;background:#474747;"></div>
<div style="position:absolute;left:543.5px;top:412.5px;width:147.5px;height:1px;background:#474747;"></div>
<div style="position:absolute;left:543.5px;top:430.0px;width:147.5px;height:1px;background:#474747;"></div>
<div style="position:absolute;left:543.5px;top:447.8px;width:147.5px;height:1px;background:#474747;"></div>
<div style="position:absolute;left:543.5px;top:465.7px;width:147.5px;height:1px;background:#474747;"></div>
<div style="position:absolute;left:543.5px;top:483.7px;width:147.5px;height:1px;background:#474747;"></div>
<div style="position:absolute;left:543.5px;top:501.8px;width:147.5px;height:1px;background:#474747;"></div>
<div style="position:absolute;left:543.5px;top:519.5px;width:147.5px;height:1px;background:#474747;"></div>
<div style="position:absolute;left:563px;top:122px;width:1px;height:398px;background:#474747;"></div>
<div style="position:absolute;left:691px;top:122px;width:10px;height:450px;background:#4f4f4f;border-left:1px solid #454545;"></div>
<svg style="left:549.1px;top:128.5px" width="9" height="6" viewBox="0 0 11 7"><path d="M0.2 3.5 Q5.5 -2.6 10.8 3.5 Q5.5 9.6 0.2 3.5Z" fill="#e6e6e6"/><circle cx="5.5" cy="3.5" r="2.1" fill="#4a4a4a"/><circle cx="5.5" cy="3.5" r="0.9" fill="#e6e6e6"/></svg>
<svg style="left:549.1px;top:146.5px" width="9" height="6" viewBox="0 0 11 7"><path d="M0.2 3.5 Q5.5 -2.6 10.8 3.5 Q5.5 9.6 0.2 3.5Z" fill="#e6e6e6"/><circle cx="5.5" cy="3.5" r="2.1" fill="#4a4a4a"/><circle cx="5.5" cy="3.5" r="0.9" fill="#e6e6e6"/></svg>
<svg style="left:549.1px;top:165px" width="9" height="6" viewBox="0 0 11 7"><path d="M0.2 3.5 Q5.5 -2.6 10.8 3.5 Q5.5 9.6 0.2 3.5Z" fill="#e6e6e6"/><circle cx="5.5" cy="3.5" r="2.1" fill="#4a4a4a"/><circle cx="5.5" cy="3.5" r="0.9" fill="#e6e6e6"/></svg>
<svg style="left:549.1px;top:183px" width="9" height="6" viewBox="0 0 11 7"><path d="M0.2 3.5 Q5.5 -2.6 10.8 3.5 Q5.5 9.6 0.2 3.5Z" fill="#e6e6e6"/><circle cx="5.5" cy="3.5" r="2.1" fill="#4a4a4a"/><circle cx="5.5" cy="3.5" r="0.9" fill="#e6e6e6"/></svg>
<svg style="left:549.1px;top:201.4px" width="9" height="6" viewBox="0 0 11 7"><path d="M0.2 3.5 Q5.5 -2.6 10.8 3.5 Q5.5 9.6 0.2 3.5Z" fill="#e6e6e6"/><circle cx="5.5" cy="3.5" r="2.1" fill="#4a4a4a"/><circle cx="5.5" cy="3.5" r="0.9" fill="#e6e6e6"/></svg>
<svg style="left:549.1px;top:219.5px" width="9" height="6" viewBox="0 0 11 7"><path d="M0.2 3.5 Q5.5 -2.6 10.8 3.5 Q5.5 9.6 0.2 3.5Z" fill="#e6e6e6"/><circle cx="5.5" cy="3.5" r="2.1" fill="#4a4a4a"/><circle cx="5.5" cy="3.5" r="0.9" fill="#e6e6e6"/></svg>
<svg style="left:549.1px;top:236.3px" width="9" height="6" viewBox="0 0 11 7"><path d="M0.2 3.5 Q5.5 -2.6 10.8 3.5 Q5.5 9.6 0.2 3.5Z" fill="#e6e6e6"/><circle cx="5.5" cy="3.5" r="2.1" fill="#4a4a4a"/><circle cx="5.5" cy="3.5" r="0.9" fill="#e6e6e6"/></svg>
<svg style="left:549.1px;top:252px" width="9" height="6" viewBox="0 0 11 7"><path d="M0.2 3.5 Q5.5 -2.6 10.8 3.5 Q5.5 9.6 0.2 3.5Z" fill="#e6e6e6"/><circle cx="5.5" cy="3.5" r="2.1" fill="#4a4a4a"/><circle cx="5.5" cy="3.5" r="0.9" fill="#e6e6e6"/></svg>
<svg style="left:549.1px;top:269.5px" width="9" height="6" viewBox="0 0 11 7"><path d="M0.2 3.5 Q5.5 -2.6 10.8 3.5 Q5.5 9.6 0.2 3.5Z" fill="#e6e6e6"/><circle cx="5.5" cy="3.5" r="2.1" fill="#4a4a4a"/><circle cx="5.5" cy="3.5" r="0.9" fill="#e6e6e6"/></svg>
<svg style="left:549.1px;top:287.5px" width="9" height="6" viewBox="0 0 11 7"><path d="M0.2 3.5 Q5.5 -2.6 10.8 3.5 Q5.5 9.6 0.2 3.5Z" fill="#e6e6e6"/><circle cx="5.5" cy="3.5" r="2.1" fill="#4a4a4a"/><circle cx="5.5" cy="3.5" r="0.9" fill="#e6e6e6"/></svg>
<svg style="left:549.1px;top:346.5px" width="9" height="6" viewBox="0 0 11 7"><path d="M0.2 3.5 Q5.5 -2.6 10.8 3.5 Q5.5 9.6 0.2 3.5Z" fill="#e6e6e6"/><circle cx="5.5" cy="3.5" r="2.1" fill="#4a4a4a"/><circle cx="5.5" cy="3.5" r="0.9" fill="#e6e6e6"/></svg>
<svg style="left:549.1px;top:365px" width="9" height="6" viewBox="0 0 11 7"><path d="M0.2 3.5 Q5.5 -2.6 10.8 3.5 Q5.5 9.6 0.2 3.5Z" fill="#e6e6e6"/><circle cx="5.5" cy="3.5" r="2.1" fill="#4a4a4a"/><circle cx="5.5" cy="3.5" r="0.9" fill="#e6e6e6"/></svg>
<svg style="left:549.1px;top:383px" width="9" height="6" viewBox="0 0 11 7"><path d="M0.2 3.5 Q5.5 -2.6 10.8 3.5 Q5.5 9.6 0.2 3.5Z" fill="#e6e6e6"/><circle cx="5.5" cy="3.5" r="2.1" fill="#4a4a4a"/><circle cx="5.5" cy="3.5" r="0.9" fill="#e6e6e6"/></svg>
<svg style="left:549.1px;top:401px" width="9" height="6" viewBox="0 0 11 7"><path d="M0.2 3.5 Q5.5 -2.6 10.8 3.5 Q5.5 9.6 0.2 3.5Z" fill="#e6e6e6"/><circle cx="5.5" cy="3.5" r="2.1" fill="#4a4a4a"/><circle cx="5.5" cy="3.5" r="0.9" fill="#e6e6e6"/></svg>
<svg style="left:549.1px;top:418.6px" width="9" height="6" viewBox="0 0 11 7"><path d="M0.2 3.5 Q5.5 -2.6 10.8 3.5 Q5.5 9.6 0.2 3.5Z" fill="#e6e6e6"/><circle cx="5.5" cy="3.5" r="2.1" fill="#4a4a4a"/><circle cx="5.5" cy="3.5" r="0.9" fill="#e6e6e6"/></svg>
<svg style="left:549.1px;top:436.3px" width="9" height="6" viewBox="0 0 11 7"><path d="M0.2 3.5 Q5.5 -2.6 10.8 3.5 Q5.5 9.6 0.2 3.5Z" fill="#e6e6e6"/><circle cx="5.5" cy="3.5" r="2.1" fill="#4a4a4a"/><circle cx="5.5" cy="3.5" r="0.9" fill="#e6e6e6"/></svg>
<svg style="left:549.1px;top:454.3px" width="9" height="6" viewBox="0 0 11 7"><path d="M0.2 3.5 Q5.5 -2.6 10.8 3.5 Q5.5 9.6 0.2 3.5Z" fill="#e6e6e6"/><circle cx="5.5" cy="3.5" r="2.1" fill="#4a4a4a"/><circle cx="5.5" cy="3.5" r="0.9" fill="#e6e6e6"/></svg>
<svg style="left:549.1px;top:472px" width="9" height="6" viewBox="0 0 11 7"><path d="M0.2 3.5 Q5.5 -2.6 10.8 3.5 Q5.5 9.6 0.2 3.5Z" fill="#e6e6e6"/><circle cx="5.5" cy="3.5" r="2.1" fill="#4a4a4a"/><circle cx="5.5" cy="3.5" r="0.9" fill="#e6e6e6"/></svg>
<svg style="left:549.1px;top:490.4px" width="9" height="6" viewBox="0 0 11 7"><path d="M0.2 3.5 Q5.5 -2.6 10.8 3.5 Q5.5 9.6 0.2 3.5Z" fill="#e6e6e6"/><circle cx="5.5" cy="3.5" r="2.1" fill="#4a4a4a"/><circle cx="5.5" cy="3.5" r="0.9" fill="#e6e6e6"/></svg>
<svg style="left:549.1px;top:508px" width="9" height="6" viewBox="0 0 11 7"><path d="M0.2 3.5 Q5.5 -2.6 10.8 3.5 Q5.5 9.6 0.2 3.5Z" fill="#e6e6e6"/><circle cx="5.5" cy="3.5" r="2.1" fill="#4a4a4a"/><circle cx="5.5" cy="3.5" r="0.9" fill="#e6e6e6"/></svg>
<svg style="left:569.8px;top:128.5px" width="5" height="5.9" viewBox="0 0 6 7"><path d="M4.6 0.8 H2.2 V5" fill="none" stroke="#dcdcdc" stroke-width="1"/><path d="M0.4 4 H4 L2.2 6.6Z" fill="#dcdcdc"/></svg>
<svg style="left:581px;top:127.5px" width="8" height="8" viewBox="0 0 9 9"><circle cx="4.5" cy="4.5" r="3.6" fill="none" stroke="#e6e6e6" stroke-width="1"/><path d="M7.05 1.95 A3.6 3.6 0 0 1 1.95 7.05 Z" fill="#e6e6e6"/></svg>
<svg style="left:598.8px;top:127.0px" width="4.5" height="9" viewBox="0 0 5 10"><rect x="0.7" y="0.6" width="3.6" height="3.6" rx="1.5" fill="none" stroke="#d8d8d8" stroke-width="1"/><rect x="0.7" y="5.8" width="3.6" height="3.6" rx="1.5" fill="none" stroke="#d8d8d8" stroke-width="1"/><path d="M2.5 3 V7" stroke="#d8d8d8" stroke-width="1"/></svg>
<div style="position:absolute;left:606.7px;top:125.0px;width:19.5px;height:13px;background:#fff;overflow:hidden;"></div>
<span style="position:absolute;left:632.8px;top:126.50px;font-size:8px;line-height:10px;color:#e8e8e8;white-space:nowrap;letter-spacing:-0.3px;">选取颜色 1</span>
<svg style="left:569.8px;top:146.5px" width="5" height="5.9" viewBox="0 0 6 7"><path d="M4.6 0.8 H2.2 V5" fill="none" stroke="#dcdcdc" stroke-width="1"/><path d="M0.4 4 H4 L2.2 6.6Z" fill="#dcdcdc"/></svg>
<div style="position:absolute;left:576px;top:143.0px;width:20px;height:13px;background:#fff;overflow:hidden;background-color:#fff;background-image:linear-gradient(45deg,#ccc 25%,transparent 25%,transparent 75%,#ccc 75%),linear-gradient(45deg,#ccc 25%,transparent 25%,transparent 75%,#ccc 75%);background-size:4px 4px;background-position:0 0,2px 2px;"></div>
<span style="position:absolute;left:602px;top:144.50px;font-size:8px;line-height:10px;color:#e8e8e8;white-space:nowrap;letter-spacing:-0.3px;">图层 3</span>
<svg style="left:569.8px;top:165px" width="5" height="5.9" viewBox="0 0 6 7"><path d="M4.6 0.8 H2.2 V5" fill="none" stroke="#dcdcdc" stroke-width="1"/><path d="M0.4 4 H4 L2.2 6.6Z" fill="#dcdcdc"/></svg>
<svg style="left:581px;top:164px" width="8" height="8" viewBox="0 0 9 9"><circle cx="4.5" cy="4.5" r="3.6" fill="none" stroke="#e6e6e6" stroke-width="1"/><path d="M7.05 1.95 A3.6 3.6 0 0 1 1.95 7.05 Z" fill="#e6e6e6"/></svg>
<svg style="left:598.8px;top:163.5px" width="4.5" height="9" viewBox="0 0 5 10"><rect x="0.7" y="0.6" width="3.6" height="3.6" rx="1.5" fill="none" stroke="#d8d8d8" stroke-width="1"/><rect x="0.7" y="5.8" width="3.6" height="3.6" rx="1.5" fill="none" stroke="#d8d8d8" stroke-width="1"/><path d="M2.5 3 V7" stroke="#d8d8d8" stroke-width="1"/></svg>
<div style="position:absolute;left:606.7px;top:161.5px;width:19.5px;height:13px;background:#000;overflow:hidden;"><div style="position:absolute;left:9px;top:2px;width:3px;height:3px;border-radius:2px;background:#fff"></div><div style="position:absolute;left:8.5px;top:5px;width:4px;height:7px;border-radius:1.5px;background:#f4f4f4"></div></div>
<span style="position:absolute;left:632.8px;top:163.00px;font-size:8px;line-height:10px;color:#e8e8e8;white-space:nowrap;letter-spacing:-0.3px;">曲线 5</span>
<svg style="left:569.8px;top:183px" width="5" height="5.9" viewBox="0 0 6 7"><path d="M4.6 0.8 H2.2 V5" fill="none" stroke="#dcdcdc" stroke-width="1"/><path d="M0.4 4 H4 L2.2 6.6Z" fill="#dcdcdc"/></svg>
<svg style="left:581px;top:182px" width="8" height="8" viewBox="0 0 9 9"><circle cx="4.5" cy="4.5" r="3.6" fill="none" stroke="#e6e6e6" stroke-width="1"/><path d="M7.05 1.95 A3.6 3.6 0 0 1 1.95 7.05 Z" fill="#e6e6e6"/></svg>
<svg style="left:598.8px;top:181.5px" width="4.5" height="9" viewBox="0 0 5 10"><rect x="0.7" y="0.6" width="3.6" height="3.6" rx="1.5" fill="none" stroke="#d8d8d8" stroke-width="1"/><rect x="0.7" y="5.8" width="3.6" height="3.6" rx="1.5" fill="none" stroke="#d8d8d8" stroke-width="1"/><path d="M2.5 3 V7" stroke="#d8d8d8" stroke-width="1"/></svg>
<div style="position:absolute;left:606.7px;top:179.5px;width:19.5px;height:13px;background:#fff;overflow:hidden;"></div>
<span style="position:absolute;left:632.8px;top:181.00px;font-size:8px;line-height:10px;color:#e8e8e8;white-space:nowrap;letter-spacing:-0.3px;">色阶 1</span>
<div style="position:absolute;left:566px;top:197.9px;width:19px;height:13px;background:#fff;overflow:hidden;background-color:#fff;background-image:linear-gradient(45deg,#ccc 25%,transparent 25%,transparent 75%,#ccc 75%),linear-gradient(45deg,#ccc 25%,transparent 25%,transparent 75%,#ccc 75%);background-size:4px 4px;background-position:0 0,2px 2px;"><div style="position:absolute;left:5px;top:3px;width:8px;height:8px;background:#f4f4f4;border-radius:1px;"></div></div>
<div style="position:absolute;left:578.5px;top:204.5px;width:6px;height:6.5px;background:#e8e8e8;border:1px solid #555;"></div>
<div style="position:absolute;left:580.5px;top:207px;width:2.5px;height:2.5px;background:#444;"></div>
<span style="position:absolute;left:592px;top:199.40px;font-size:8px;line-height:10px;color:#e8e8e8;white-space:nowrap;letter-spacing:-0.3px;text-decoration:underline;">产品</span>
<svg style="left:569.8px;top:219.5px" width="5" height="5.9" viewBox="0 0 6 7"><path d="M4.6 0.8 H2.2 V5" fill="none" stroke="#dcdcdc" stroke-width="1"/><path d="M0.4 4 H4 L2.2 6.6Z" fill="#dcdcdc"/></svg>
<svg style="left:581px;top:218.5px" width="8" height="8" viewBox="0 0 9 9"><circle cx="4.5" cy="4.5" r="3.6" fill="none" stroke="#e6e6e6" stroke-width="1"/><path d="M7.05 1.95 A3.6 3.6 0 0 1 1.95 7.05 Z" fill="#e6e6e6"/></svg>
<svg style="left:598.8px;top:218.0px" width="4.5" height="9" viewBox="0 0 5 10"><rect x="0.7" y="0.6" width="3.6" height="3.6" rx="1.5" fill="none" stroke="#d8d8d8" stroke-width="1"/><rect x="0.7" y="5.8" width="3.6" height="3.6" rx="1.5" fill="none" stroke="#d8d8d8" stroke-width="1"/><path d="M2.5 3 V7" stroke="#d8d8d8" stroke-width="1"/></svg>
<div style="position:absolute;left:606.7px;top:216.0px;width:19.5px;height:13px;background:#fff;overflow:hidden;"></div>
<span style="position:absolute;left:632.8px;top:217.50px;font-size:8px;line-height:10px;color:#e8e8e8;white-space:nowrap;letter-spacing:-0.3px;">选取颜色 2</span>
<svg style="left:569.8px;top:236.3px" width="5" height="5.9" viewBox="0 0 6 7"><path d="M4.6 0.8 H2.2 V5" fill="none" stroke="#dcdcdc" stroke-width="1"/><path d="M0.4 4 H4 L2.2 6.6Z" fill="#dcdcdc"/></svg>
<svg style="left:581px;top:235.3px" width="8" height="8" viewBox="0 0 9 9"><circle cx="4.5" cy="4.5" r="3.6" fill="none" stroke="#e6e6e6" stroke-width="1"/><path d="M7.05 1.95 A3.6 3.6 0 0 1 1.95 7.05 Z" fill="#e6e6e6"/></svg>
<svg style="left:598.8px;top:234.8px" width="4.5" height="9" viewBox="0 0 5 10"><rect x="0.7" y="0.6" width="3.6" height="3.6" rx="1.5" fill="none" stroke="#d8d8d8" stroke-width="1"/><rect x="0.7" y="5.8" width="3.6" height="3.6" rx="1.5" fill="none" stroke="#d8d8d8" stroke-width="1"/><path d="M2.5 3 V7" stroke="#d8d8d8" stroke-width="1"/></svg>
<div style="position:absolute;left:606.7px;top:232.8px;width:19.5px;height:13px;background:#fff;overflow:hidden;"></div>
<span style="position:absolute;left:632.8px;top:234.30px;font-size:8px;line-height:10px;color:#e8e8e8;white-space:nowrap;letter-spacing:-0.3px;">色相/饱和度 1</span>
<svg style="left:564.5px;top:253px" width="6" height="4" viewBox="0 0 6 4"><path d="M0.5 0.5 L3 3.2 L5.5 0.5" class="ic" style="stroke-width:0.9;stroke:#c8c8c8"/></svg>
<svg style="left:572.5px;top:251px" width="10" height="8" viewBox="0 0 10 8"><path d="M0.4 0.6 H3.6 L4.6 1.8 H9.6 V7.6 H0.4Z" fill="#dcdcdc"/></svg>
<span style="position:absolute;left:589.7px;top:250.00px;font-size:8px;line-height:10px;color:#e8e8e8;white-space:nowrap;letter-spacing:-0.3px;text-decoration:underline;">背景</span>
<div style="position:absolute;left:576px;top:266.25px;width:20px;height:12.5px;background:#fff;overflow:hidden;background-color:#fff;background-image:linear-gradient(45deg,#ccc 25%,transparent 25%,transparent 75%,#ccc 75%),linear-gradient(45deg,#ccc 25%,transparent 25%,transparent 75%,#ccc 75%);background-size:4px 4px;background-position:0 0,2px 2px;"><div style="position:absolute;left:0;top:0;width:7px;height:12.5px;background:#1c2224"></div></div>
<div style="position:absolute;left:590px;top:272.5px;width:6.5px;height:6.5px;background:#535353;border:1px solid #e0e0e0;"></div>
<div style="position:absolute;left:589.2px;top:271.7px;width:2.2px;height:2.2px;background:#e8e8e8;"></div>
<div style="position:absolute;left:595px;top:271.7px;width:2.2px;height:2.2px;background:#e8e8e8;"></div>
<div style="position:absolute;left:589.2px;top:277.5px;width:2.2px;height:2.2px;background:#e8e8e8;"></div>
<div style="position:absolute;left:595px;top:277.5px;width:2.2px;height:2.2px;background:#e8e8e8;"></div>
<span style="position:absolute;left:602px;top:267.50px;font-size:8px;line-height:10px;color:#e8e8e8;white-space:nowrap;letter-spacing:-0.3px;">矩形 2</span>
<svg style="left:578.8px;top:287.5px" width="5" height="5.9" viewBox="0 0 6 7"><path d="M4.6 0.8 H2.2 V5" fill="none" stroke="#dcdcdc" stroke-width="1"/><path d="M0.4 4 H4 L2.2 6.6Z" fill="#dcdcdc"/></svg>
<div style="position:absolute;left:585.5px;top:282.55px;width:22px;height:15.5px;background:#0a0a0a;overflow:hidden;border:1px solid #f2f2f2;border-left-width:2.5px;border-bottom-width:2px;"></div>
<div style="position:absolute;left:600px;top:291.5px;width:6px;height:6.5px;background:#e8e8e8;border:1px solid #555;"></div>
<div style="position:absolute;left:602px;top:294px;width:2.5px;height:2.5px;background:#444;"></div>
<span style="position:absolute;left:612.8px;top:285.50px;font-size:8px;line-height:10px;color:#f4f4f4;white-space:nowrap;letter-spacing:-0.3px;">图层 4</span>
<svg style="left:674px;top:286px" width="11" height="9" viewBox="0 0 11 9"><circle cx="4" cy="4.5" r="3.3" fill="none" stroke="#d4d4d4" stroke-width="1"/><circle cx="7" cy="4.5" r="3.3" fill="none" stroke="#d4d4d4" stroke-width="1"/></svg>
<svg style="left:686.5px;top:288.5px" width="6" height="4" viewBox="0 0 6 4"><path d="M0.5 3.4 L3 0.7 L5.5 3.4" class="ic" style="stroke-width:0.9;stroke:#c8c8c8"/></svg>
<svg style="left:596.5px;top:305.8px" width="9" height="6" viewBox="0 0 11 7"><path d="M0.2 3.5 Q5.5 -2.6 10.8 3.5 Q5.5 9.6 0.2 3.5Z" fill="#e6e6e6"/><circle cx="5.5" cy="3.5" r="2.1" fill="#4a4a4a"/><circle cx="5.5" cy="3.5" r="0.9" fill="#e6e6e6"/></svg>
<div style="position:absolute;left:606.7px;top:302.55px;width:19.5px;height:12.5px;background:#fff;overflow:hidden;"></div>
<span style="position:absolute;left:633.8px;top:303.80px;font-size:8px;line-height:10px;color:#e8e8e8;white-space:nowrap;letter-spacing:-0.3px;">智能滤镜</span>
<svg style="left:607.3px;top:319.4px" width="9" height="6" viewBox="0 0 11 7"><path d="M0.2 3.5 Q5.5 -2.6 10.8 3.5 Q5.5 9.6 0.2 3.5Z" fill="#e6e6e6"/><circle cx="5.5" cy="3.5" r="2.1" fill="#4a4a4a"/><circle cx="5.5" cy="3.5" r="0.9" fill="#e6e6e6"/></svg>
<span style="position:absolute;left:618.6px;top:317.40px;font-size:8px;line-height:10px;color:#e8e8e8;white-space:nowrap;letter-spacing:-0.3px;">浮雕效果</span>
<svg style="left:676.5px;top:318.9px" width="9" height="7" viewBox="0 0 9 7"><path d="M0.3 1.6 H8.7 M0.3 5.2 H8.7" stroke="#d8d8d8" stroke-width="0.9"/><path d="M5.2 1.6 L7 3.4 L3.6 3.4Z M3.6 5.2 L5.4 7 L1.8 7Z" fill="#d8d8d8"/></svg>
<svg style="left:607.3px;top:332px" width="9" height="6" viewBox="0 0 11 7"><path d="M0.2 3.5 Q5.5 -2.6 10.8 3.5 Q5.5 9.6 0.2 3.5Z" fill="#e6e6e6"/><circle cx="5.5" cy="3.5" r="2.1" fill="#4a4a4a"/><circle cx="5.5" cy="3.5" r="0.9" fill="#e6e6e6"/></svg>
<span style="position:absolute;left:618.6px;top:330.00px;font-size:8px;line-height:10px;color:#e8e8e8;white-space:nowrap;letter-spacing:-0.3px;">添加杂色</span>
<svg style="left:676.5px;top:331.5px" width="9" height="7" viewBox="0 0 9 7"><path d="M0.3 1.6 H8.7 M0.3 5.2 H8.7" stroke="#d8d8d8" stroke-width="0.9"/><path d="M5.2 1.6 L7 3.4 L3.6 3.4Z M3.6 5.2 L5.4 7 L1.8 7Z" fill="#d8d8d8"/></svg>
<svg style="left:579.0999999999999px;top:346.5px" width="5" height="5.9" viewBox="0 0 6 7"><path d="M4.6 0.8 H2.2 V5" fill="none" stroke="#dcdcdc" stroke-width="1"/><path d="M0.4 4 H4 L2.2 6.6Z" fill="#dcdcdc"/></svg>
<svg style="left:591.8px;top:345.5px" width="8" height="8" viewBox="0 0 9 9"><circle cx="4.5" cy="4.5" r="3.6" fill="none" stroke="#e6e6e6" stroke-width="1"/><path d="M7.05 1.95 A3.6 3.6 0 0 1 1.95 7.05 Z" fill="#e6e6e6"/></svg>
<svg style="left:608.5999999999999px;top:345.0px" width="4.5" height="9" viewBox="0 0 5 10"><rect x="0.7" y="0.6" width="3.6" height="3.6" rx="1.5" fill="none" stroke="#d8d8d8" stroke-width="1"/><rect x="0.7" y="5.8" width="3.6" height="3.6" rx="1.5" fill="none" stroke="#d8d8d8" stroke-width="1"/><path d="M2.5 3 V7" stroke="#d8d8d8" stroke-width="1"/></svg>
<div style="position:absolute;left:616px;top:343.0px;width:20px;height:13px;background:#020202;overflow:hidden;"><div style="position:absolute;left:9px;top:9.5px;width:3px;height:2px;background:#3a3a3a;border-radius:1px;"></div></div>
<span style="position:absolute;left:643px;top:344.50px;font-size:8px;line-height:10px;color:#e8e8e8;white-space:nowrap;letter-spacing:-0.3px;">曲线 4</span>
<svg style="left:579.0999999999999px;top:365px" width="5" height="5.9" viewBox="0 0 6 7"><path d="M4.6 0.8 H2.2 V5" fill="none" stroke="#dcdcdc" stroke-width="1"/><path d="M0.4 4 H4 L2.2 6.6Z" fill="#dcdcdc"/></svg>
<svg style="left:591.8px;top:364px" width="8" height="8" viewBox="0 0 9 9"><circle cx="4.5" cy="4.5" r="3.6" fill="none" stroke="#e6e6e6" stroke-width="1"/><path d="M7.05 1.95 A3.6 3.6 0 0 1 1.95 7.05 Z" fill="#e6e6e6"/></svg>
<svg style="left:608.5999999999999px;top:363.5px" width="4.5" height="9" viewBox="0 0 5 10"><rect x="0.7" y="0.6" width="3.6" height="3.6" rx="1.5" fill="none" stroke="#d8d8d8" stroke-width="1"/><rect x="0.7" y="5.8" width="3.6" height="3.6" rx="1.5" fill="none" stroke="#d8d8d8" stroke-width="1"/><path d="M2.5 3 V7" stroke="#d8d8d8" stroke-width="1"/></svg>
<div style="position:absolute;left:616px;top:361.5px;width:20px;height:13px;background:#020202;overflow:hidden;"><div style="position:absolute;left:8px;top:9px;width:6px;height:2px;background:#e0e0e0;border-radius:1px;filter:blur(0.6px)"></div></div>
<span style="position:absolute;left:643px;top:363.00px;font-size:8px;line-height:10px;color:#e8e8e8;white-space:nowrap;letter-spacing:-0.3px;">曲线 3 拷贝</span>
<svg style="left:579.0999999999999px;top:383px" width="5" height="5.9" viewBox="0 0 6 7"><path d="M4.6 0.8 H2.2 V5" fill="none" stroke="#dcdcdc" stroke-width="1"/><path d="M0.4 4 H4 L2.2 6.6Z" fill="#dcdcdc"/></svg>
<svg style="left:591.8px;top:382px" width="8" height="8" viewBox="0 0 9 9"><circle cx="4.5" cy="4.5" r="3.6" fill="none" stroke="#e6e6e6" stroke-width="1"/><path d="M7.05 1.95 A3.6 3.6 0 0 1 1.95 7.05 Z" fill="#e6e6e6"/></svg>
<svg style="left:608.5999999999999px;top:381.5px" width="4.5" height="9" viewBox="0 0 5 10"><rect x="0.7" y="0.6" width="3.6" height="3.6" rx="1.5" fill="none" stroke="#d8d8d8" stroke-width="1"/><rect x="0.7" y="5.8" width="3.6" height="3.6" rx="1.5" fill="none" stroke="#d8d8d8" stroke-width="1"/><path d="M2.5 3 V7" stroke="#d8d8d8" stroke-width="1"/></svg>
<div style="position:absolute;left:616px;top:379.5px;width:20px;height:13px;background:#020202;overflow:hidden;"><div style="position:absolute;left:7px;top:9.5px;width:12px;height:2.2px;background:#f0f0f0;border-radius:1px;filter:blur(0.7px)"></div></div>
<span style="position:absolute;left:643px;top:381.00px;font-size:8px;line-height:10px;color:#e8e8e8;white-space:nowrap;letter-spacing:-0.3px;">曲线 3</span>
<svg style="left:579.0999999999999px;top:401px" width="5" height="5.9" viewBox="0 0 6 7"><path d="M4.6 0.8 H2.2 V5" fill="none" stroke="#dcdcdc" stroke-width="1"/><path d="M0.4 4 H4 L2.2 6.6Z" fill="#dcdcdc"/></svg>
<svg style="left:591.8px;top:400px" width="8" height="8" viewBox="0 0 9 9"><circle cx="4.5" cy="4.5" r="3.6" fill="none" stroke="#e6e6e6" stroke-width="1"/><path d="M7.05 1.95 A3.6 3.6 0 0 1 1.95 7.05 Z" fill="#e6e6e6"/></svg>
<svg style="left:608.5999999999999px;top:399.5px" width="4.5" height="9" viewBox="0 0 5 10"><rect x="0.7" y="0.6" width="3.6" height="3.6" rx="1.5" fill="none" stroke="#d8d8d8" stroke-width="1"/><rect x="0.7" y="5.8" width="3.6" height="3.6" rx="1.5" fill="none" stroke="#d8d8d8" stroke-width="1"/><path d="M2.5 3 V7" stroke="#d8d8d8" stroke-width="1"/></svg>
<div style="position:absolute;left:616px;top:397.5px;width:20px;height:13px;background:#020202;overflow:hidden;"><div style="position:absolute;left:0;top:0;width:20px;height:13px;background:radial-gradient(ellipse 75% 85% at 40% 25%,#000 0%,#000 55%,#777 85%,#ddd 100%);"></div><div style="position:absolute;left:1px;top:8.5px;width:3px;height:3px;background:#ddd;filter:blur(0.5px)"></div></div>
<span style="position:absolute;left:643px;top:399.00px;font-size:8px;line-height:10px;color:#e8e8e8;white-space:nowrap;letter-spacing:-0.3px;">曲线 2</span>
<svg style="left:579.0999999999999px;top:418.6px" width="5" height="5.9" viewBox="0 0 6 7"><path d="M4.6 0.8 H2.2 V5" fill="none" stroke="#dcdcdc" stroke-width="1"/><path d="M0.4 4 H4 L2.2 6.6Z" fill="#dcdcdc"/></svg>
<svg style="left:591.8px;top:417.6px" width="8" height="8" viewBox="0 0 9 9"><circle cx="4.5" cy="4.5" r="3.6" fill="none" stroke="#e6e6e6" stroke-width="1"/><path d="M7.05 1.95 A3.6 3.6 0 0 1 1.95 7.05 Z" fill="#e6e6e6"/></svg>
<svg style="left:608.5999999999999px;top:417.1px" width="4.5" height="9" viewBox="0 0 5 10"><rect x="0.7" y="0.6" width="3.6" height="3.6" rx="1.5" fill="none" stroke="#d8d8d8" stroke-width="1"/><rect x="0.7" y="5.8" width="3.6" height="3.6" rx="1.5" fill="none" stroke="#d8d8d8" stroke-width="1"/><path d="M2.5 3 V7" stroke="#d8d8d8" stroke-width="1"/></svg>
<div style="position:absolute;left:616px;top:415.1px;width:20px;height:13px;background:#020202;overflow:hidden;"><div style="position:absolute;left:6px;top:7.8px;width:14px;height:1.8px;background:#fff;filter:blur(0.3px)"></div><div style="position:absolute;left:0;top:8px;width:0;height:0;border-left:4px solid #fff;border-top:2px solid transparent;border-bottom:2px solid transparent;"></div></div>
<span style="position:absolute;left:643px;top:416.60px;font-size:8px;line-height:10px;color:#e8e8e8;white-space:nowrap;letter-spacing:-0.3px;">曲线 1</span>
<div style="position:absolute;left:575px;top:432.8px;width:20.5px;height:13px;background:#fff;overflow:hidden;background-color:#fff;background-image:linear-gradient(45deg,#ccc 25%,transparent 25%,transparent 75%,#ccc 75%),linear-gradient(45deg,#ccc 25%,transparent 25%,transparent 75%,#ccc 75%);background-size:4px 4px;background-position:0 0,2px 2px;"><div style="position:absolute;left:13px;top:0;width:8px;height:4px;background:#ddd"></div></div>
<div style="position:absolute;left:588.5px;top:439.8px;width:6.5px;height:6.5px;background:#535353;border:1px solid #e0e0e0;"></div>
<div style="position:absolute;left:587.7px;top:439.0px;width:2.2px;height:2.2px;background:#e8e8e8;"></div>
<div style="position:absolute;left:593.5px;top:439.0px;width:2.2px;height:2.2px;background:#e8e8e8;"></div>
<div style="position:absolute;left:587.7px;top:444.8px;width:2.2px;height:2.2px;background:#e8e8e8;"></div>
<div style="position:absolute;left:593.5px;top:444.8px;width:2.2px;height:2.2px;background:#e8e8e8;"></div>
<span style="position:absolute;left:601.6px;top:434.30px;font-size:8px;line-height:10px;color:#e8e8e8;white-space:nowrap;letter-spacing:-0.3px;text-decoration:underline;">矩形 3</span>
<svg style="left:579.4px;top:454.3px" width="5" height="5.9" viewBox="0 0 6 7"><path d="M4.6 0.8 H2.2 V5" fill="none" stroke="#dcdcdc" stroke-width="1"/><path d="M0.4 4 H4 L2.2 6.6Z" fill="#dcdcdc"/></svg>
<div style="position:absolute;left:587px;top:450.8px;width:19.5px;height:13px;background:#fff;overflow:hidden;background-color:#fff;background-image:linear-gradient(45deg,#ccc 25%,transparent 25%,transparent 75%,#ccc 75%),linear-gradient(45deg,#ccc 25%,transparent 25%,transparent 75%,#ccc 75%);background-size:4px 4px;background-position:0 0,2px 2px;"><div style="position:absolute;left:0;top:0;width:8px;height:13px;background:linear-gradient(90deg,#fff,rgba(255,255,255,0))"></div></div>
<span style="position:absolute;left:612px;top:452.30px;font-size:8px;line-height:10px;color:#e8e8e8;white-space:nowrap;letter-spacing:-0.3px;">图层 2</span>
<svg style="left:579.4px;top:472px" width="5" height="5.9" viewBox="0 0 6 7"><path d="M4.6 0.8 H2.2 V5" fill="none" stroke="#dcdcdc" stroke-width="1"/><path d="M0.4 4 H4 L2.2 6.6Z" fill="#dcdcdc"/></svg>
<div style="position:absolute;left:587px;top:468.5px;width:19.5px;height:13px;background:#fff;overflow:hidden;background-color:#fff;background-image:linear-gradient(45deg,#ccc 25%,transparent 25%,transparent 75%,#ccc 75%),linear-gradient(45deg,#ccc 25%,transparent 25%,transparent 75%,#ccc 75%);background-size:4px 4px;background-position:0 0,2px 2px;"><div style="position:absolute;left:0;top:0;width:10px;height:13px;background:linear-gradient(90deg,#fff 30%,rgba(255,255,255,0))"></div></div>
<span style="position:absolute;left:612px;top:470.00px;font-size:8px;line-height:10px;color:#e8e8e8;white-space:nowrap;letter-spacing:-0.3px;">图层 1</span>
<div style="position:absolute;left:575px;top:486.9px;width:20.5px;height:13px;background:#fff;overflow:hidden;background-color:#fff;background-image:linear-gradient(45deg,#ccc 25%,transparent 25%,transparent 75%,#ccc 75%),linear-gradient(45deg,#ccc 25%,transparent 25%,transparent 75%,#ccc 75%);background-size:4px 4px;background-position:0 0,2px 2px;"><div style="position:absolute;left:4px;top:0;width:17px;height:7px;background:#22282c"></div><div style="position:absolute;left:0;top:0;width:4px;height:4px;background:#22282c"></div></div>
<div style="position:absolute;left:588.5px;top:493.9px;width:6.5px;height:6.5px;background:#535353;border:1px solid #e0e0e0;"></div>
<div style="position:absolute;left:587.7px;top:493.09999999999997px;width:2.2px;height:2.2px;background:#e8e8e8;"></div>
<div style="position:absolute;left:593.5px;top:493.09999999999997px;width:2.2px;height:2.2px;background:#e8e8e8;"></div>
<div style="position:absolute;left:587.7px;top:498.9px;width:2.2px;height:2.2px;background:#e8e8e8;"></div>
<div style="position:absolute;left:593.5px;top:498.9px;width:2.2px;height:2.2px;background:#e8e8e8;"></div>
<span style="position:absolute;left:601.6px;top:488.40px;font-size:8px;line-height:10px;color:#e8e8e8;white-space:nowrap;letter-spacing:-0.3px;text-decoration:underline;">矩形 1</span>
<div style="position:absolute;left:576.5px;top:504.5px;width:19.5px;height:13px;background:#fff;overflow:hidden;"></div>
<span style="position:absolute;left:601.6px;top:506.00px;font-size:8px;line-height:10px;color:#e8e8e8;white-space:nowrap;letter-spacing:-0.3px;">图层 0</span>
<div style="position:absolute;left:543.5px;top:572px;width:158px;height:18px;background:#505050;border-top:1px solid #454545;"></div>
<svg style="left:570px;top:575.5px" width="12" height="7" viewBox="0 0 12 7"><rect x="0.6" y="1.2" width="5.6" height="4.6" rx="2.2" fill="none" stroke="#949494" stroke-width="1.1"/><rect x="5.8" y="1.2" width="5.6" height="4.6" rx="2.2" fill="none" stroke="#949494" stroke-width="1.1"/></svg>
<span style="position:absolute;left:588.5px;top:572.75px;font-size:9.5px;line-height:11.5px;color:#949494;white-space:nowrap;font-style:italic;font-family:&quot;Liberation Serif&quot;,serif;font-weight:bold;">fx</span>
<div style="position:absolute;left:605.5px;top:575px;width:10px;height:8px;background:#949494;"></div>
<div style="position:absolute;left:608.5px;top:577px;width:4px;height:4px;background:#535353;border-radius:2px;"></div>
<svg style="left:623.5px;top:574.5px" width="9" height="9" viewBox="0 0 9 9"><circle cx="4.5" cy="4.5" r="3.6" fill="none" stroke="#949494" stroke-width="1"/><path d="M7.05 1.95 A3.6 3.6 0 0 1 1.95 7.05 Z" fill="#949494"/></svg>
<svg style="left:640px;top:575px" width="10" height="8" viewBox="0 0 10 8"><path d="M0.4 0.6 H3.6 L4.6 1.8 H9.6 V7.6 H0.4Z" fill="#949494"/></svg>
<svg style="left:657.5px;top:574.5px" width="9" height="9" viewBox="0 0 9 9"><path d="M0.8 0.8 H8.2 V5.6 L5.6 8.2 H0.8Z" fill="none" stroke="#949494" stroke-width="1.1"/><path d="M5.4 8 V5.4 H8" fill="none" stroke="#949494" stroke-width="1"/></svg>
<svg style="left:675.5px;top:574px" width="8" height="10" viewBox="0 0 8 10"><path d="M0.4 2 H7.6 M2.8 2 V0.8 H5.2 V2" fill="none" stroke="#949494" stroke-width="1"/><path d="M1.2 3 H6.8 L6.4 9.4 H1.6Z" fill="#949494"/></svg>
<div style="position:absolute;left:162px;top:61.5px;width:214.5px;height:298.5px;border-radius:4px 4px 3px 3px;background:rgba(132,132,120,0.18);backdrop-filter:blur(2.5px) saturate(0.35) brightness(0.92);-webkit-backdrop-filter:blur(2.5px) saturate(0.35) brightness(0.92);border:1px solid rgba(30,30,30,0.72);box-shadow:inset 0 0 0 1px rgba(235,235,230,0.35),0 1px 5px rgba(0,0,0,0.6);"></div>
<div style="position:absolute;left:163px;top:83px;width:212.5px;height:67px;background:linear-gradient(180deg,rgba(112,112,112,0.95) 0%,rgba(128,128,128,0.95) 55%,rgba(190,190,190,0.95) 97%,rgba(200,200,200,0.9) 100%);"></div>
<div style="position:absolute;left:163px;top:62.5px;width:212.5px;height:21px;border-radius:3px 3px 0 0;background:linear-gradient(90deg,#858585 0%,#7b7b7b 24%,#3c3c3c 35%,#0b0b0b 42%,#0c0c0c 60%,#3c3c3c 70%,#606060 80%,#6c6c6c 100%);box-shadow:inset 0 1px 0 rgba(255,255,255,0.35);"></div>
<div style="position:absolute;left:163px;top:62.5px;width:212.5px;height:9px;border-radius:3px 3px 0 0;background:linear-gradient(180deg,rgba(255,255,255,0.2),rgba(255,255,255,0.03));"></div>
<span style="position:absolute;left:167.8px;top:66.75px;font-size:9.5px;line-height:11.5px;color:#141414;white-space:nowrap;text-shadow:0 0 3px rgba(255,255,255,0.85),0 0 5px rgba(255,255,255,0.6);">添加杂色</span>
<div style="position:absolute;left:333.8px;top:61.5px;width:40px;height:16.2px;border-radius:0 3px 3.5px 3.5px;background:linear-gradient(180deg,#dc8a7c 0%,#d26a58 44%,#bb2a14 50%,#c23a22 80%,#cf5a40 100%);border:1px solid #5a2018;border-top-color:#7a4038;box-shadow:inset 0 0 0 1px rgba(255,200,185,0.55);"></div>
<svg style="left:349.4px;top:64.6px" width="9" height="8.6" viewBox="0 0 9 8.6"><path d="M1.2 1 L7.8 7.6 M7.8 1 L1.2 7.6" stroke="#6a2a20" stroke-width="3" stroke-linecap="square" opacity="0.5"/><path d="M1.2 1 L7.8 7.6 M7.8 1 L1.2 7.6" stroke="#ffffff" stroke-width="2" stroke-linecap="square"/></svg>
<div style="position:absolute;left:165.2px;top:81.6px;width:208px;height:274.6px;background:rgba(160,160,152,0.75);border-radius:1px;"></div>
<div style="position:absolute;left:166.8px;top:82.8px;width:204.8px;height:271.8px;background:#535353;border:1px solid #454545;"></div>
<svg style="left:175px;top:90.5px" width="132" height="131.5" viewBox="0 0 132 131.5"><defs><filter id="nz" x="0" y="0" width="100%" height="100%"><feTurbulence type="fractalNoise" baseFrequency="0.95" numOctaves="2" seed="7" result="t"/><feColorMatrix in="t" type="matrix" values="0 0 0 0 0.62  0 0 0 0 0.62  0 0 0 0 0.62  1.0 1.0 1.0 0 -1.42"/><feComposite in2="SourceGraphic" operator="in"/></filter></defs><rect width="132" height="131.5" fill="#141414"/><rect width="132" height="131.5" fill="#b8b8b8" filter="url(#nz)" opacity="0.42"/></svg>
<div style="position:absolute;left:316.7px;top:90px;width:35px;height:17.4px;border-radius:9px;border:1px solid #d2d2d2;color:#f0f0f0;font-size:8.5px;line-height:15.4px;text-align:center;letter-spacing:-0.2px;">确定</div>
<div style="position:absolute;left:316.7px;top:112.5px;width:35px;height:17.4px;border-radius:9px;border:1px solid #747474;color:#e6e6e6;font-size:8.5px;line-height:15.4px;text-align:center;letter-spacing:-0.2px;">复位</div>
<div style="position:absolute;left:317.2px;top:140.8px;width:8.4px;height:8.4px;background:#e4e4e4;border-radius:1.5px;"></div>
<svg style="left:317.2px;top:140.8px" width="8.4" height="8.4" viewBox="0 0 8.4 8.4"><path d="M1.8 4.2 L3.6 6 L6.8 2" fill="none" stroke="#2c2c2c" stroke-width="1.5"/></svg>
<span style="position:absolute;left:331px;top:140.15px;font-size:8.5px;line-height:10.5px;color:#ececec;white-space:nowrap;letter-spacing:0.1px;">预览(P)</span>
<svg style="left:201.3px;top:227.6px" width="10" height="10" viewBox="0 0 10 10"><circle cx="4.3" cy="4.2" r="3.1" fill="none" stroke="#d8d8d8" stroke-width="1"/><path d="M6.6 6.6 L9.2 9.2" stroke="#d8d8d8" stroke-width="1.5" stroke-linecap="round"/><path d="M3 4.2 H5.6" stroke="#d8d8d8" stroke-width="0.8"/></svg>
<svg style="left:269.8px;top:227.6px" width="10" height="10" viewBox="0 0 10 10"><circle cx="4.3" cy="4.2" r="3.1" fill="none" stroke="#d8d8d8" stroke-width="1"/><path d="M6.6 6.6 L9.2 9.2" stroke="#d8d8d8" stroke-width="1.5" stroke-linecap="round"/><path d="M3 4.2 H5.6 M4.3 2.9 V5.5" stroke="#d8d8d8" stroke-width="0.8"/></svg>
<span style="position:absolute;left:230px;top:227.80px;font-size:8px;line-height:10px;color:#e6e6e6;white-space:nowrap;letter-spacing:0.2px;">100%</span>
<span style="position:absolute;left:183.5px;top:250.25px;font-size:8.5px;line-height:10.5px;color:#ececec;white-space:nowrap;letter-spacing:-0.1px;">数量(A):</span>
<div style="position:absolute;left:217px;top:250px;width:35.5px;height:11px;background:#3f3f3f;border:1px solid #4a6a92;"></div>
<div style="position:absolute;left:217.8px;top:250.8px;width:18.5px;height:9.4px;background:#3b7fd6;"></div>
<span style="position:absolute;left:218.6px;top:250.25px;font-size:8.5px;line-height:10.5px;color:#ffffff;white-space:nowrap;letter-spacing:-0.1px;">9.16</span>
<span style="position:absolute;left:255.5px;top:250.25px;font-size:8.5px;line-height:10.5px;color:#ececec;white-space:nowrap;">%</span>
<div style="position:absolute;left:179.6px;top:266.3px;width:110.5px;height:1.7px;background:#808080;"></div>
<svg style="left:187.5px;top:269.3px" width="7" height="5.4" viewBox="0 0 7 5.4"><path d="M3.5 0.2 L6.8 5.2 H0.2Z" fill="#f2f2f2"/></svg>
<div style="position:absolute;left:175px;top:285.5px;width:190px;height:44px;background:#4f4f4f;border:1px solid #616161;"></div>
<div style="position:absolute;left:187px;top:281px;width:20.5px;height:9px;background:#535353;"></div>
<span style="position:absolute;left:189.4px;top:280.25px;font-size:8.5px;line-height:10.5px;color:#ececec;white-space:nowrap;letter-spacing:-0.2px;">分布</span>
<div style="position:absolute;left:181.4px;top:296.5px;width:8px;height:8px;background:#4a4a4a;border:1px solid #6a6a6a;border-radius:5px;"></div>
<span style="position:absolute;left:194.3px;top:295.25px;font-size:8.5px;line-height:10.5px;color:#ececec;white-space:nowrap;letter-spacing:0.05px;">平均分布(U)</span>
<div style="position:absolute;left:181px;top:313.3px;width:8.6px;height:8.6px;background:#f0f0f0;border-radius:5px;"></div>
<div style="position:absolute;left:183.6px;top:315.9px;width:3.4px;height:3.4px;background:#2c2c2c;border-radius:2px;"></div>
<span style="position:absolute;left:194.3px;top:312.35px;font-size:8.5px;line-height:10.5px;color:#ececec;white-space:nowrap;letter-spacing:0.05px;">高斯分布(G)</span>
<div style="position:absolute;left:174px;top:337.2px;width:8.4px;height:8.4px;background:#e4e4e4;border-radius:1.5px;"></div>
<svg style="left:174px;top:337.2px" width="8.4" height="8.4" viewBox="0 0 8.4 8.4"><path d="M1.8 4.2 L3.6 6 L6.8 2" fill="none" stroke="#2c2c2c" stroke-width="1.5"/></svg>
<span style="position:absolute;left:188.3px;top:336.55px;font-size:8.5px;line-height:10.5px;color:#ececec;white-space:nowrap;letter-spacing:-0.1px;">单色(M)</span>
<div style="position:absolute;left:0px;top:586.3px;width:705px;height:1.1px;background:#2e2e2e;"></div>
<div style="position:absolute;left:0px;top:587.4px;width:705px;height:2.6px;background:#464646;"></div>
<div style="position:absolute;left:0px;top:0px;width:1.2px;height:590px;background:#2c2c2c;"></div>
</div></body></html>
